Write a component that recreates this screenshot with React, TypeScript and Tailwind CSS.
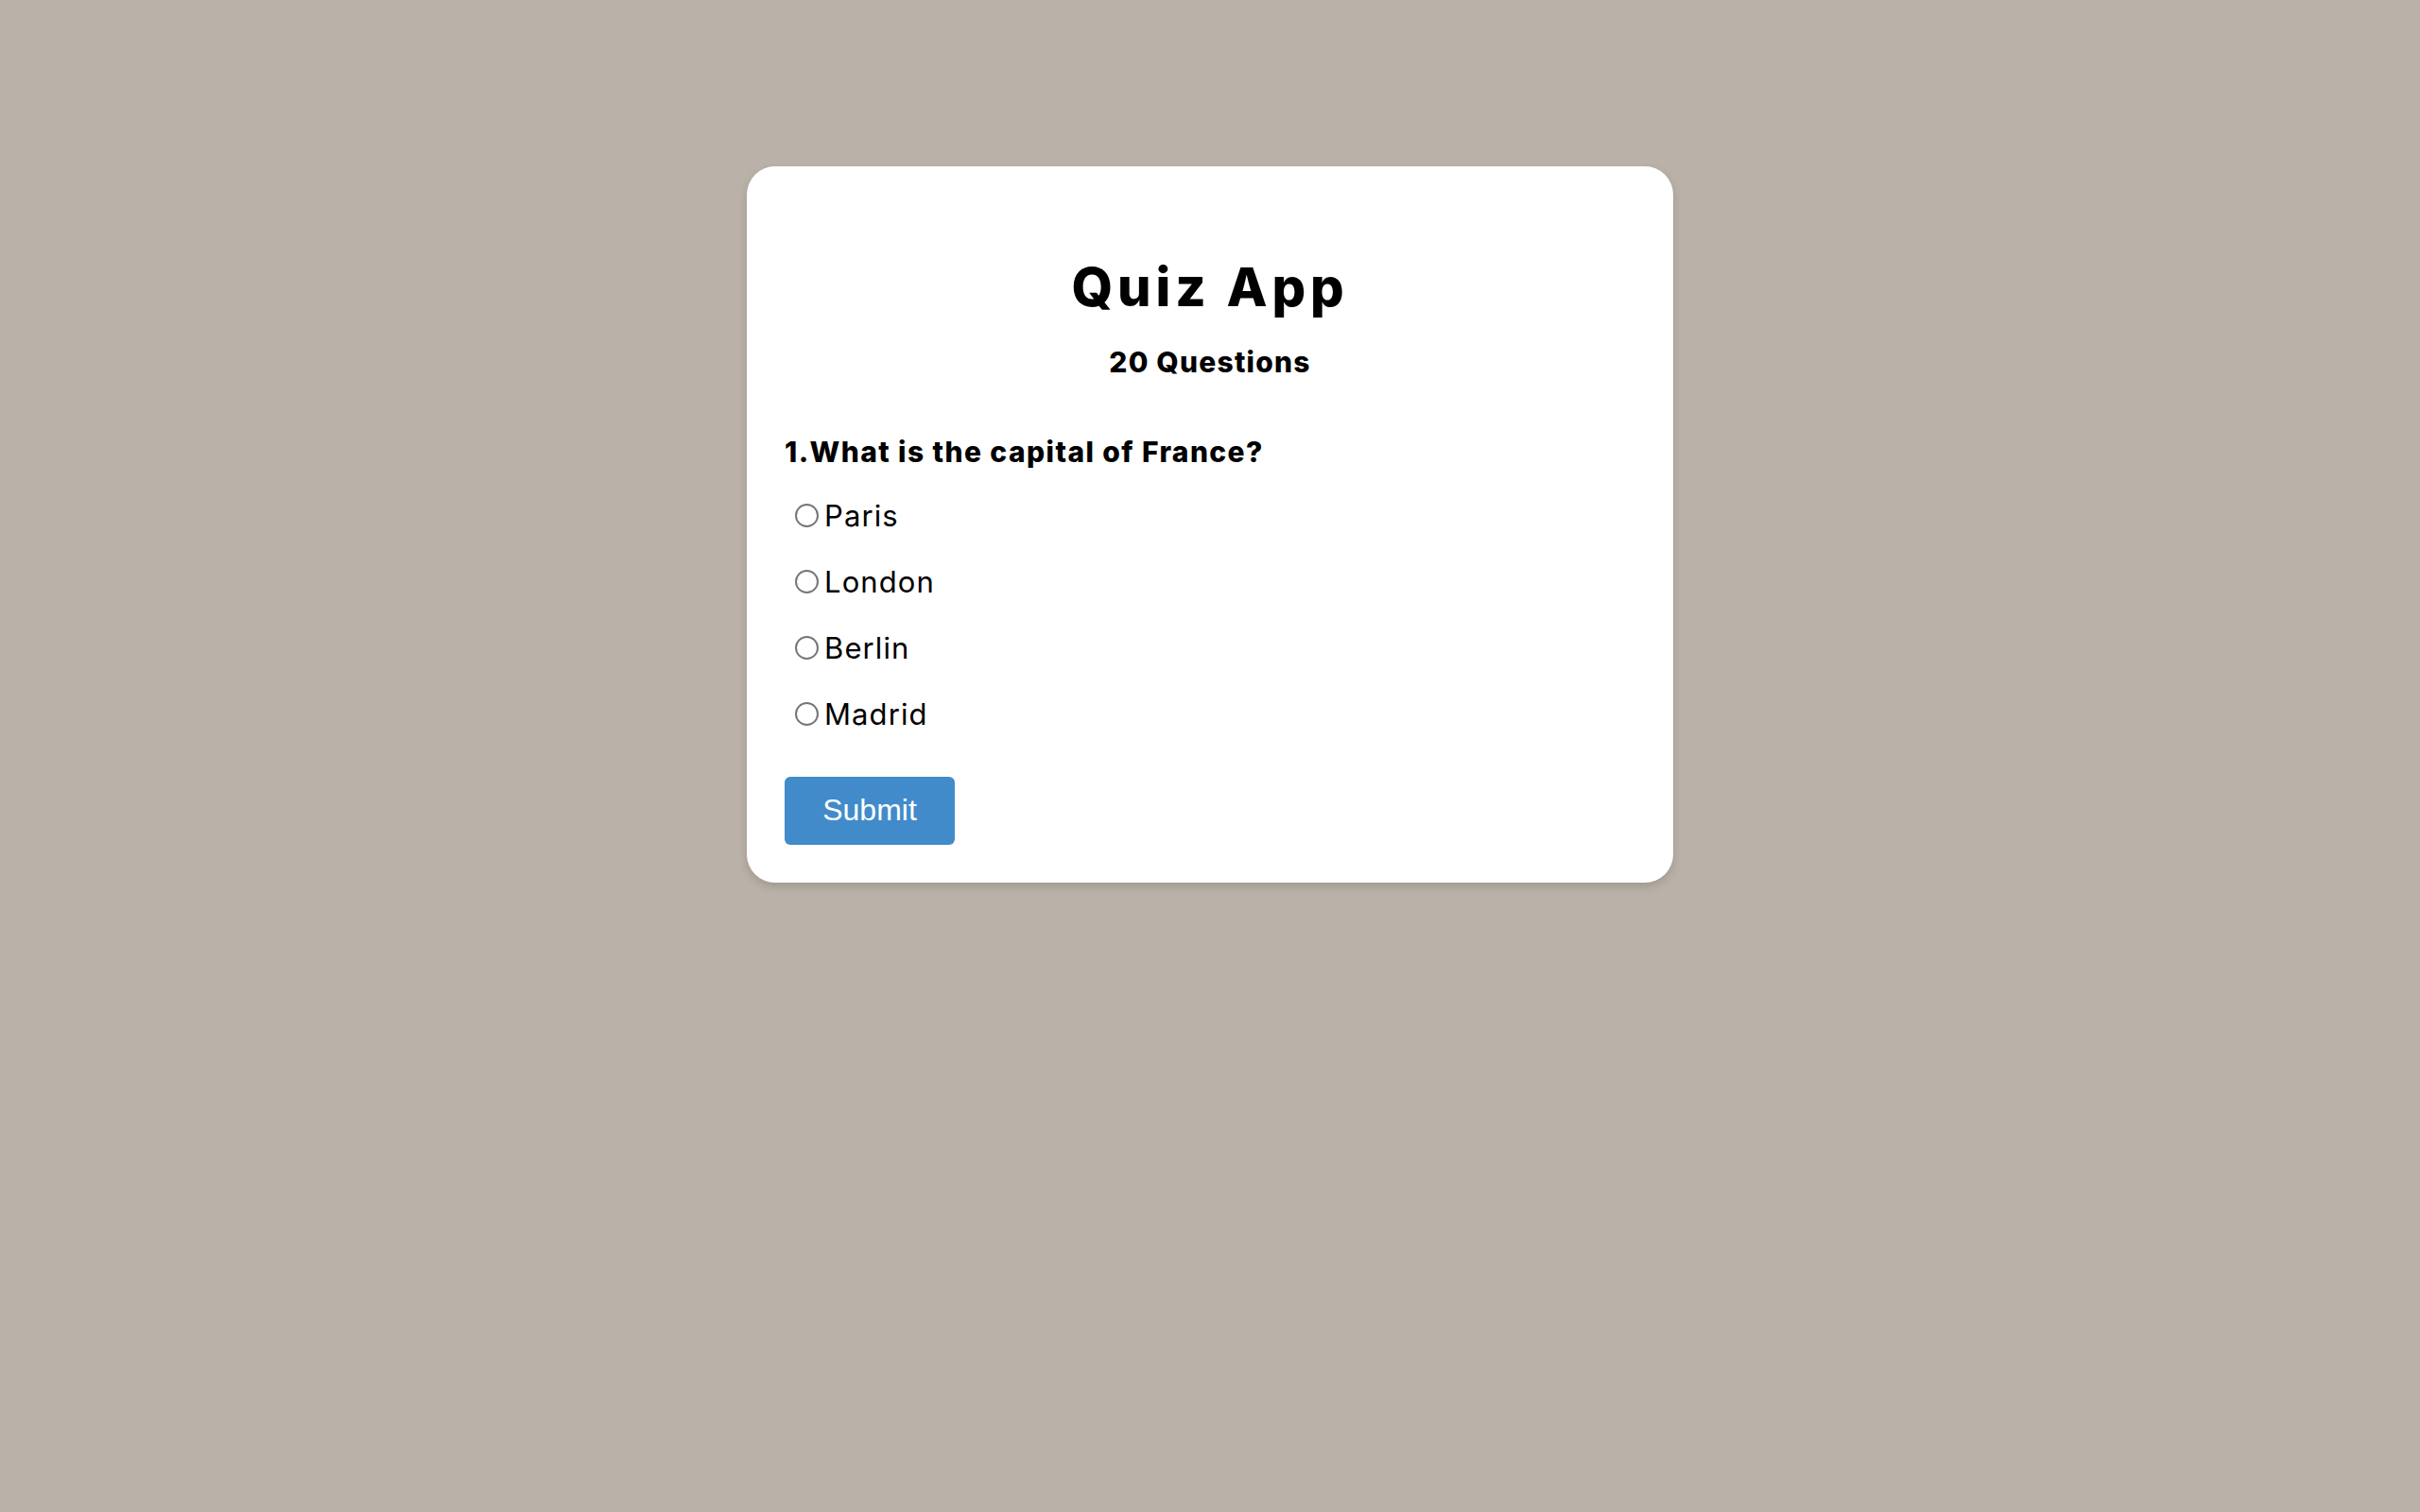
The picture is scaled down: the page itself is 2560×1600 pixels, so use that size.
import React, { useState } from "react";

const options = ["Paris", "London", "Berlin", "Madrid"];

const App = () => {
  const [picked, setPicked] = useState<string | null>(null);

  return (
    <div className="min-h-screen w-full bg-[#bab2a8] pt-[176px] font-['Inter','Noto_Sans',sans-serif] text-black">
      <div className="mx-auto w-[980px] rounded-[30px] bg-white px-[40px] pt-[40px] pb-[40px] shadow-[0_4px_10px_rgba(0,0,0,0.15)]">
        {/* Heading */}
        <div className="flex flex-col items-center">
          <h1 className="mt-[61px] text-[56px] leading-[55px] font-extrabold tracking-[4.8px]">Quiz App</h1>
          <h2 className="mt-[36px] text-[30px] leading-[30px] font-extrabold tracking-[1.2px]">20 Questions</h2>
        </div>

        {/* Question */}
        <div className="mt-[65px]">
          <p className="text-[30px] leading-[30px] font-extrabold tracking-[1.4px]">1.What is the capital of France?</p>
          <div className="mt-[17px] flex flex-col">
            {options.map((opt) => (
              <label key={opt} className="flex h-[70px] cursor-pointer items-center">
                <input
                  type="radio"
                  name="q1"
                  checked={picked === opt}
                  onChange={() => setPicked(opt)}
                  className="ml-[11px] mr-[6px] h-[25px] w-[25px] appearance-none rounded-full border-2 border-[#767676] checked:border-[7px] checked:border-[#1a73e8]"
                />
                <span className="text-[31px] leading-[31px] tracking-[1.1px]">{opt}</span>
              </label>
            ))}
          </div>
        </div>

        <button className="mt-[32px] h-[72px] w-[180px] rounded-[6px] bg-[#428bcb] pb-[3px] font-['Liberation_Sans',Arial,sans-serif] text-[32px] text-white">
          Submit
        </button>
      </div>
    </div>
  );
};

export default App;
